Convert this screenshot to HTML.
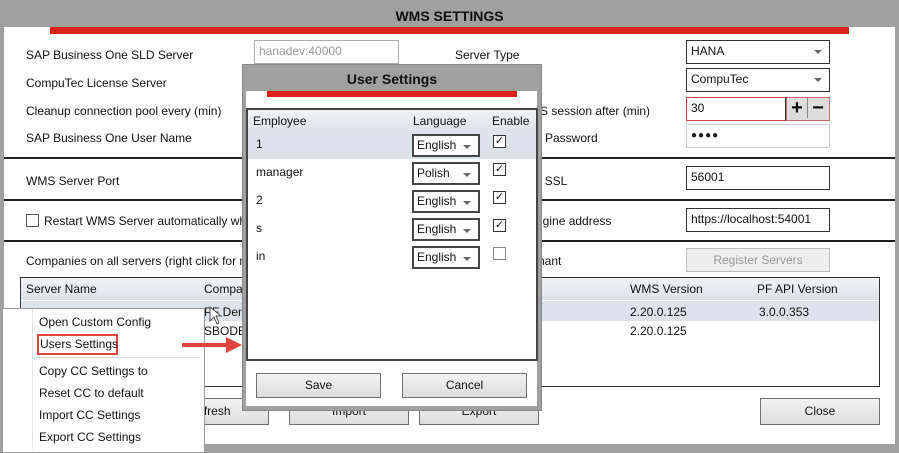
<!DOCTYPE html><html><head><style>
*{margin:0;padding:0;box-sizing:border-box}
body{width:899px;height:449px;background:#a0a0a0;position:relative;overflow:hidden;font-family:"Liberation Sans",sans-serif;font-size:12px;color:#111}
.a{position:absolute;white-space:nowrap}
.box{position:absolute;border:1px solid #7a7a7a;background:#fff;padding:3px 4px;line-height:15px}
.dd::after{content:"";position:absolute;right:7px;top:9px;border-left:4px solid transparent;border-right:4px solid transparent;border-top:4px solid #666}
.btn{position:absolute;border:1px solid #707070;background:linear-gradient(#f3f3f3,#dcdcdc);text-align:center;line-height:23px}
.ln{position:absolute;height:2px;background:#222}
.cb{position:absolute;width:13px;height:13px;border:1px solid #333;background:#fff;font-size:11px;line-height:11px;text-align:center}
</style></head><body>
<div class="a" style="left:0;top:8px;width:899px;text-align:center;font-weight:bold;font-size:14px">WMS SETTINGS</div>
<div class="a" style="left:4px;top:27px;width:891px;height:417px;background:#fff"></div>
<div class="a" style="left:50px;top:27px;width:799px;height:7px;background:#dc2119"></div>
<div class="a" style="left:26px;top:48px">SAP Business One SLD Server</div>
<div class="a" style="left:26px;top:76px">CompuTec License Server</div>
<div class="a" style="left:26px;top:104px">Cleanup connection pool every (min)</div>
<div class="a" style="left:26px;top:131px">SAP Business One User Name</div>
<div class="ln" style="left:4px;top:157px;width:891px"></div>
<div class="a" style="left:26px;top:174px">WMS Server Port</div>
<div class="ln" style="left:4px;top:199px;width:891px"></div>
<div class="cb" style="left:26px;top:214px;border-color:#555"></div>
<div class="a" style="left:44px;top:214px">Restart WMS Server automatically when</div>
<div class="ln" style="left:4px;top:240px;width:891px"></div>
<div class="a" style="left:26px;top:254px">Companies on all servers (right click for more</div>
<div class="box" style="left:254px;top:40px;width:145px;height:24px;color:#999;border-color:#aaa">hanadev:40000</div>
<div class="a" style="left:455px;top:48px">Server Type</div>
<div class="a" style="left:530px;top:104px">MS session after (min)</div>
<div class="a" style="left:535px;top:131px">e Password</div>
<div class="a" style="left:538px;top:174px">t SSL</div>
<div class="a" style="left:536px;top:214px">ngine address</div>
<div class="a" style="left:538px;top:254px">nant</div>
<div class="box dd" style="left:686px;top:40px;width:144px;height:24px;border-color:#333">HANA</div>
<div class="box dd" style="left:686px;top:68px;width:144px;height:24px;border-color:#333">CompuTec</div>
<div class="box" style="left:686px;top:97px;width:100px;height:24px;border-color:#c44;border-right-color:#333">30</div>
<div class="a" style="left:786px;top:97px;width:44px;height:24px;border:1px solid #c66;background:#ddd;font-size:20px;font-weight:bold;line-height:20px"><span style="display:inline-block;width:21px;text-align:center;border-right:1px solid #888">+</span><span style="display:inline-block;width:20px;text-align:center">−</span></div>
<div class="box" style="left:686px;top:124px;width:144px;height:24px;border-color:#ccc;font-size:10px;letter-spacing:1px">●●●●</div>
<div class="box" style="left:686px;top:166px;width:144px;height:24px;border-color:#333">56001</div>
<div class="box" style="left:686px;top:208px;width:144px;height:24px;border-color:#333">https://localhost:54001</div>
<div class="btn" style="left:686px;top:248px;width:144px;height:24px;color:#999;border-color:#bbb;background:#eee">Register Servers</div>
<div class="a" style="left:20px;top:277px;width:860px;height:110px;border:1px solid #333;background:#fff"></div>
<div class="a" style="left:21px;top:278px;width:858px;height:22px;background:linear-gradient(#f1f3f6,#dde2e8)"></div>
<div class="a" style="left:21px;top:301px;width:858px;height:20px;background:#dde3ea"></div>
<div class="a" style="left:26px;top:282px">Server Name</div>
<div class="a" style="left:204px;top:282px">Company</div>
<div class="a" style="left:630px;top:282px">WMS Version</div>
<div class="a" style="left:757px;top:282px">PF API Version</div>
<div class="a" style="left:204px;top:305px">PF Demo</div>
<div class="a" style="left:630px;top:305px">2.20.0.125</div>
<div class="a" style="left:759px;top:305px">3.0.0.353</div>
<div class="a" style="left:204px;top:324px">SBODEMO</div>
<div class="a" style="left:630px;top:324px">2.20.0.125</div>
<div class="btn" style="left:150px;top:398px;width:119px;height:27px;line-height:25px">Refresh</div>
<div class="btn" style="left:289px;top:398px;width:120px;height:27px;line-height:25px">Import</div>
<div class="btn" style="left:419px;top:398px;width:120px;height:27px;line-height:25px">Export</div>
<div class="btn" style="left:760px;top:398px;width:120px;height:27px;line-height:25px">Close</div>
<!-- dialog -->
<div class="a" style="left:242px;top:64px;width:300px;height:347px;background:#a0a0a0;border:1px solid #888"></div>
<div class="a" style="left:242px;top:71px;width:300px;text-align:center;font-weight:bold;font-size:14px">User Settings</div>
<div class="a" style="left:246px;top:91px;width:291px;height:315px;background:#fff"></div>
<div class="a" style="left:267px;top:91px;width:250px;height:6px;background:#dc2119"></div>
<div class="a" style="left:246px;top:108px;width:292px;height:253px;border:2px solid #444;background:#fff"></div>
<div class="a" style="left:248px;top:110px;width:288px;height:22px;background:linear-gradient(#f1f3f6,#dde2e8)"></div>
<div class="a" style="left:248px;top:132px;width:288px;height:27px;background:#dde3ea"></div>
<div class="a" style="left:253px;top:114px">Employee</div>
<div class="a" style="left:413px;top:114px">Language</div>
<div class="a" style="left:492px;top:114px">Enable</div>
<div class="a" style="left:256px;top:137px">1</div>
<div class="a" style="left:256px;top:165px">manager</div>
<div class="a" style="left:256px;top:193px">2</div>
<div class="a" style="left:256px;top:221px">s</div>
<div class="a" style="left:256px;top:249px">in</div>
<div class="box dd" style="left:412px;top:134px;width:68px;height:23px;border:2px solid #444;padding:2px 3px">English</div>
<div class="box dd" style="left:412px;top:162px;width:68px;height:23px;border:2px solid #444;padding:2px 3px">Polish</div>
<div class="box dd" style="left:412px;top:190px;width:68px;height:23px;border:2px solid #444;padding:2px 3px">English</div>
<div class="box dd" style="left:412px;top:218px;width:68px;height:23px;border:2px solid #444;padding:2px 3px">English</div>
<div class="box dd" style="left:412px;top:246px;width:68px;height:23px;border:2px solid #444;padding:2px 3px">English</div>
<div class="cb" style="left:493px;top:135px">✓</div>
<div class="cb" style="left:493px;top:163px">✓</div>
<div class="cb" style="left:493px;top:191px">✓</div>
<div class="cb" style="left:493px;top:219px">✓</div>
<div class="cb" style="left:493px;top:247px;border-color:#888"></div>
<div class="btn" style="left:256px;top:373px;width:125px;height:25px">Save</div>
<div class="btn" style="left:402px;top:373px;width:125px;height:25px">Cancel</div>
<!-- context menu -->
<div class="a" style="left:2px;top:308px;width:203px;height:145px;background:#fff;border:1px solid #999"></div>
<div class="a" style="left:32px;top:309px;width:1px;height:140px;background:#e4e4e4"></div>
<div class="a" style="left:34px;top:357px;width:166px;height:1px;background:#ddd"></div>
<div class="a" style="left:39px;top:315px">Open Custom Config</div>
<div class="a" style="left:37px;top:334px;width:81px;height:21px;border:2px solid #e0443c"></div>
<div class="a" style="left:40px;top:337px">Users Settings</div>
<div class="a" style="left:39px;top:364px">Copy CC Settings to</div>
<div class="a" style="left:39px;top:386px">Reset CC to default</div>
<div class="a" style="left:39px;top:408px">Import CC Settings</div>
<div class="a" style="left:39px;top:430px">Export CC Settings</div>
<svg class="a" style="left:180px;top:334px" width="64" height="22"><line x1="2" y1="11" x2="48" y2="11" stroke="#e0443c" stroke-width="4"/><polygon points="46,3 62,11 46,19" fill="#e0443c"/></svg>
<svg class="a" style="left:209px;top:306px" width="14" height="20"><polygon points="1,1 1,15 5,11 8,18 10,17 7,10 12,10" fill="#fff" stroke="#555"/></svg>
</body></html>
